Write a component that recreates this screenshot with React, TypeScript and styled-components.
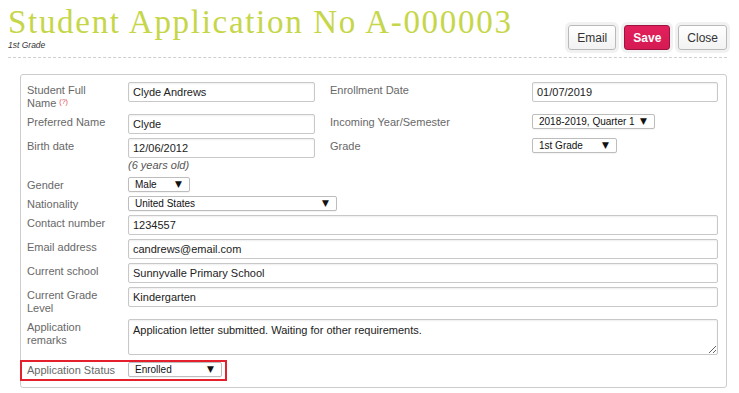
import type { FC, ReactNode } from 'react';
import styled, { createGlobalStyle } from 'styled-components';

const GlobalStyle = createGlobalStyle`
  html, body {
    margin: 0;
    padding: 0;
    background: #fff;
    font-family: 'Liberation Sans', Arial, sans-serif;
  }
`;

const StyledPage = styled.div`
  padding: 0 12px 0 8px;
`;

const StyledHeader = styled.div`
  display: flex;
  align-items: flex-end;
  justify-content: space-between;
  padding-bottom: 7px;
  border-bottom: 1px dashed #cfcfcf;
`;

const StyledTitle = styled.h1`
  margin: 0;
  padding-top: 4px;
  font-family: 'Liberation Serif', 'Times New Roman', serif;
  font-size: 33px;
  font-weight: 400;
  line-height: 36px;
  letter-spacing: 1.7px;
  color: #c6d649;
`;

const StyledSubtitle = styled.div`
  font-size: 8.5px;
  font-style: italic;
  line-height: 10px;
  color: #333;
`;

const StyledButtonGroup = styled.div`
  display: flex;
  gap: 8px;
`;

const StyledButton = styled.button<{ $primary?: boolean }>`
  height: 25px;
  padding: 0 8px;
  border-radius: 3px;
  border: 1px solid ${({ $primary }) => ($primary ? '#9d1443' : '#b9b9b9')};
  background: ${({ $primary }) =>
    $primary ? 'linear-gradient(#e2205d, #d51a52)' : 'linear-gradient(#ffffff, #f2f2f2)'};
  box-shadow: 0 0 0 3px #f1f1f1;
  color: ${({ $primary }) => ($primary ? '#fff' : '#333')};
  font-family: 'Liberation Sans', Arial, sans-serif;
  font-size: 12px;
  font-weight: ${({ $primary }) => ($primary ? 700 : 400)};
  cursor: pointer;
`;

const StyledPanel = styled.div`
  margin: 16px 0 0 12px;
  padding: 7px 8px 6px 6px;
  border: 1px solid #cccccc;
  border-radius: 3px;
  display: flex;
  flex-direction: column;
  gap: 4px;
`;

const StyledRow = styled.div`
  display: flex;
  align-items: flex-start;
`;

const StyledLabel = styled.div<{ $width?: string; $indent?: boolean }>`
  flex: none;
  box-sizing: border-box;
  width: ${({ $width }) => $width || '101px'};
  margin-left: ${({ $indent }) => ($indent ? '15px' : '0')};
  padding: 2px 12px 0 0;
  font-size: 11px;
  line-height: 13px;
  color: #686868;
`;

const StyledHelp = styled.span`
  display: inline-block;
  margin-left: 3px;
  vertical-align: 3px;
  font-size: 7px;
  line-height: 7px;
  color: #e0474c;
`;

const StyledField = styled.div<{ $width?: string }>`
  display: flex;
  flex-direction: column;
  align-items: flex-start;
  width: ${({ $width }) => $width || 'auto'};
  flex: ${({ $width }) => ($width ? 'none' : '1')};
`;

const StyledInput = styled.input`
  box-sizing: border-box;
  width: 100%;
  height: 20px;
  margin: 0;
  padding: 0 4px;
  border: 1px solid #c8c8c8;
  border-radius: 2px;
  box-shadow: inset 0 1px 2px rgba(0, 0, 0, 0.07);
  font-family: 'Liberation Sans', Arial, sans-serif;
  font-size: 11px;
  color: #222;
  outline: none;
`;

const StyledTextArea = styled.textarea`
  box-sizing: border-box;
  width: 100%;
  height: 36px;
  margin: 0;
  padding: 3px 4px;
  border: 1px solid #c8c8c8;
  border-radius: 2px;
  box-shadow: inset 0 1px 2px rgba(0, 0, 0, 0.07);
  font-family: 'Liberation Sans', Arial, sans-serif;
  font-size: 11px;
  line-height: 14px;
  color: #222;
  resize: vertical;
  outline: none;
`;

const StyledSelect = styled.div<{ $width: string }>`
  box-sizing: border-box;
  display: flex;
  align-items: center;
  justify-content: space-between;
  width: ${({ $width }) => $width};
  height: 15px;
  padding: 0 7px 0 6px;
  border: 1px solid #bdbdbd;
  border-radius: 2px;
  background: #fff;
  box-shadow: 0 1px 1px rgba(0, 0, 0, 0.05);
  font-size: 10px;
  color: #111;
`;

const StyledArrow = styled.span`
  font-family: 'DejaVu Sans', sans-serif;
  font-size: 9px;
  line-height: 9px;
  color: #111;
`;

const StyledHint = styled.div`
  font-size: 11px;
  font-style: italic;
  line-height: 15px;
  color: #555;
`;

const StyledHighlight = styled.div`
  display: flex;
  align-items: flex-start;
  align-self: flex-start;
  margin: 1px 0 0 -7px;
  padding: 0 3px 2px 5px;
  border: 2px solid #e3202b;
`;

const Select: FC<{ width: string; children: ReactNode }> = ({ width, children }) => (
  <StyledSelect $width={width}>
    <span>{children}</span>
    <StyledArrow>▼</StyledArrow>
  </StyledSelect>
);

const App: FC = () => (
  <StyledPage>
    <GlobalStyle />
    <StyledHeader>
      <div>
        <StyledTitle>Student Application No A-000003</StyledTitle>
        <StyledSubtitle>1st Grade</StyledSubtitle>
      </div>
      <StyledButtonGroup>
        <StyledButton>Email</StyledButton>
        <StyledButton $primary>Save</StyledButton>
        <StyledButton>Close</StyledButton>
      </StyledButtonGroup>
    </StyledHeader>

    <StyledPanel>
      <StyledRow>
        <StyledLabel>
          Student Full
          <br />
          Name<StyledHelp>(?)</StyledHelp>
        </StyledLabel>
        <StyledField $width="187px">
          <StyledInput defaultValue="Clyde Andrews" />
        </StyledField>
        <StyledLabel $width="202px" $indent>
          Enrollment Date
        </StyledLabel>
        <StyledField>
          <StyledInput defaultValue="01/07/2019" />
        </StyledField>
      </StyledRow>

      <StyledRow>
        <StyledLabel>Preferred Name</StyledLabel>
        <StyledField $width="187px">
          <StyledInput defaultValue="Clyde" />
        </StyledField>
        <StyledLabel $width="202px" $indent>
          Incoming Year/Semester
        </StyledLabel>
        <StyledField>
          <Select width="123px">2018-2019, Quarter 1</Select>
        </StyledField>
      </StyledRow>

      <StyledRow>
        <StyledLabel>Birth date</StyledLabel>
        <StyledField $width="187px">
          <StyledInput defaultValue="12/06/2012" />
          <StyledHint>(6 years old)</StyledHint>
        </StyledField>
        <StyledLabel $width="202px" $indent>
          Grade
        </StyledLabel>
        <StyledField>
          <Select width="85px">1st Grade</Select>
        </StyledField>
      </StyledRow>

      <StyledRow>
        <StyledLabel>Gender</StyledLabel>
        <StyledField>
          <Select width="62px">Male</Select>
        </StyledField>
      </StyledRow>

      <StyledRow>
        <StyledLabel>Nationality</StyledLabel>
        <StyledField>
          <Select width="209px">United States</Select>
        </StyledField>
      </StyledRow>

      <StyledRow>
        <StyledLabel>Contact number</StyledLabel>
        <StyledField>
          <StyledInput defaultValue="1234557" />
        </StyledField>
      </StyledRow>

      <StyledRow>
        <StyledLabel>Email address</StyledLabel>
        <StyledField>
          <StyledInput defaultValue="candrews@email.com" />
        </StyledField>
      </StyledRow>

      <StyledRow>
        <StyledLabel>Current school</StyledLabel>
        <StyledField>
          <StyledInput defaultValue="Sunnyvalle Primary School" />
        </StyledField>
      </StyledRow>

      <StyledRow>
        <StyledLabel>Current Grade Level</StyledLabel>
        <StyledField>
          <StyledInput defaultValue="Kindergarten" />
        </StyledField>
      </StyledRow>

      <StyledRow>
        <StyledLabel>Application remarks</StyledLabel>
        <StyledField>
          <StyledTextArea defaultValue="Application letter submitted. Waiting for other requirements." />
        </StyledField>
      </StyledRow>

      <StyledHighlight>
        <StyledLabel>Application Status</StyledLabel>
        <StyledField>
          <Select width="94px">Enrolled</Select>
        </StyledField>
      </StyledHighlight>
    </StyledPanel>
  </StyledPage>
);

export default App;
